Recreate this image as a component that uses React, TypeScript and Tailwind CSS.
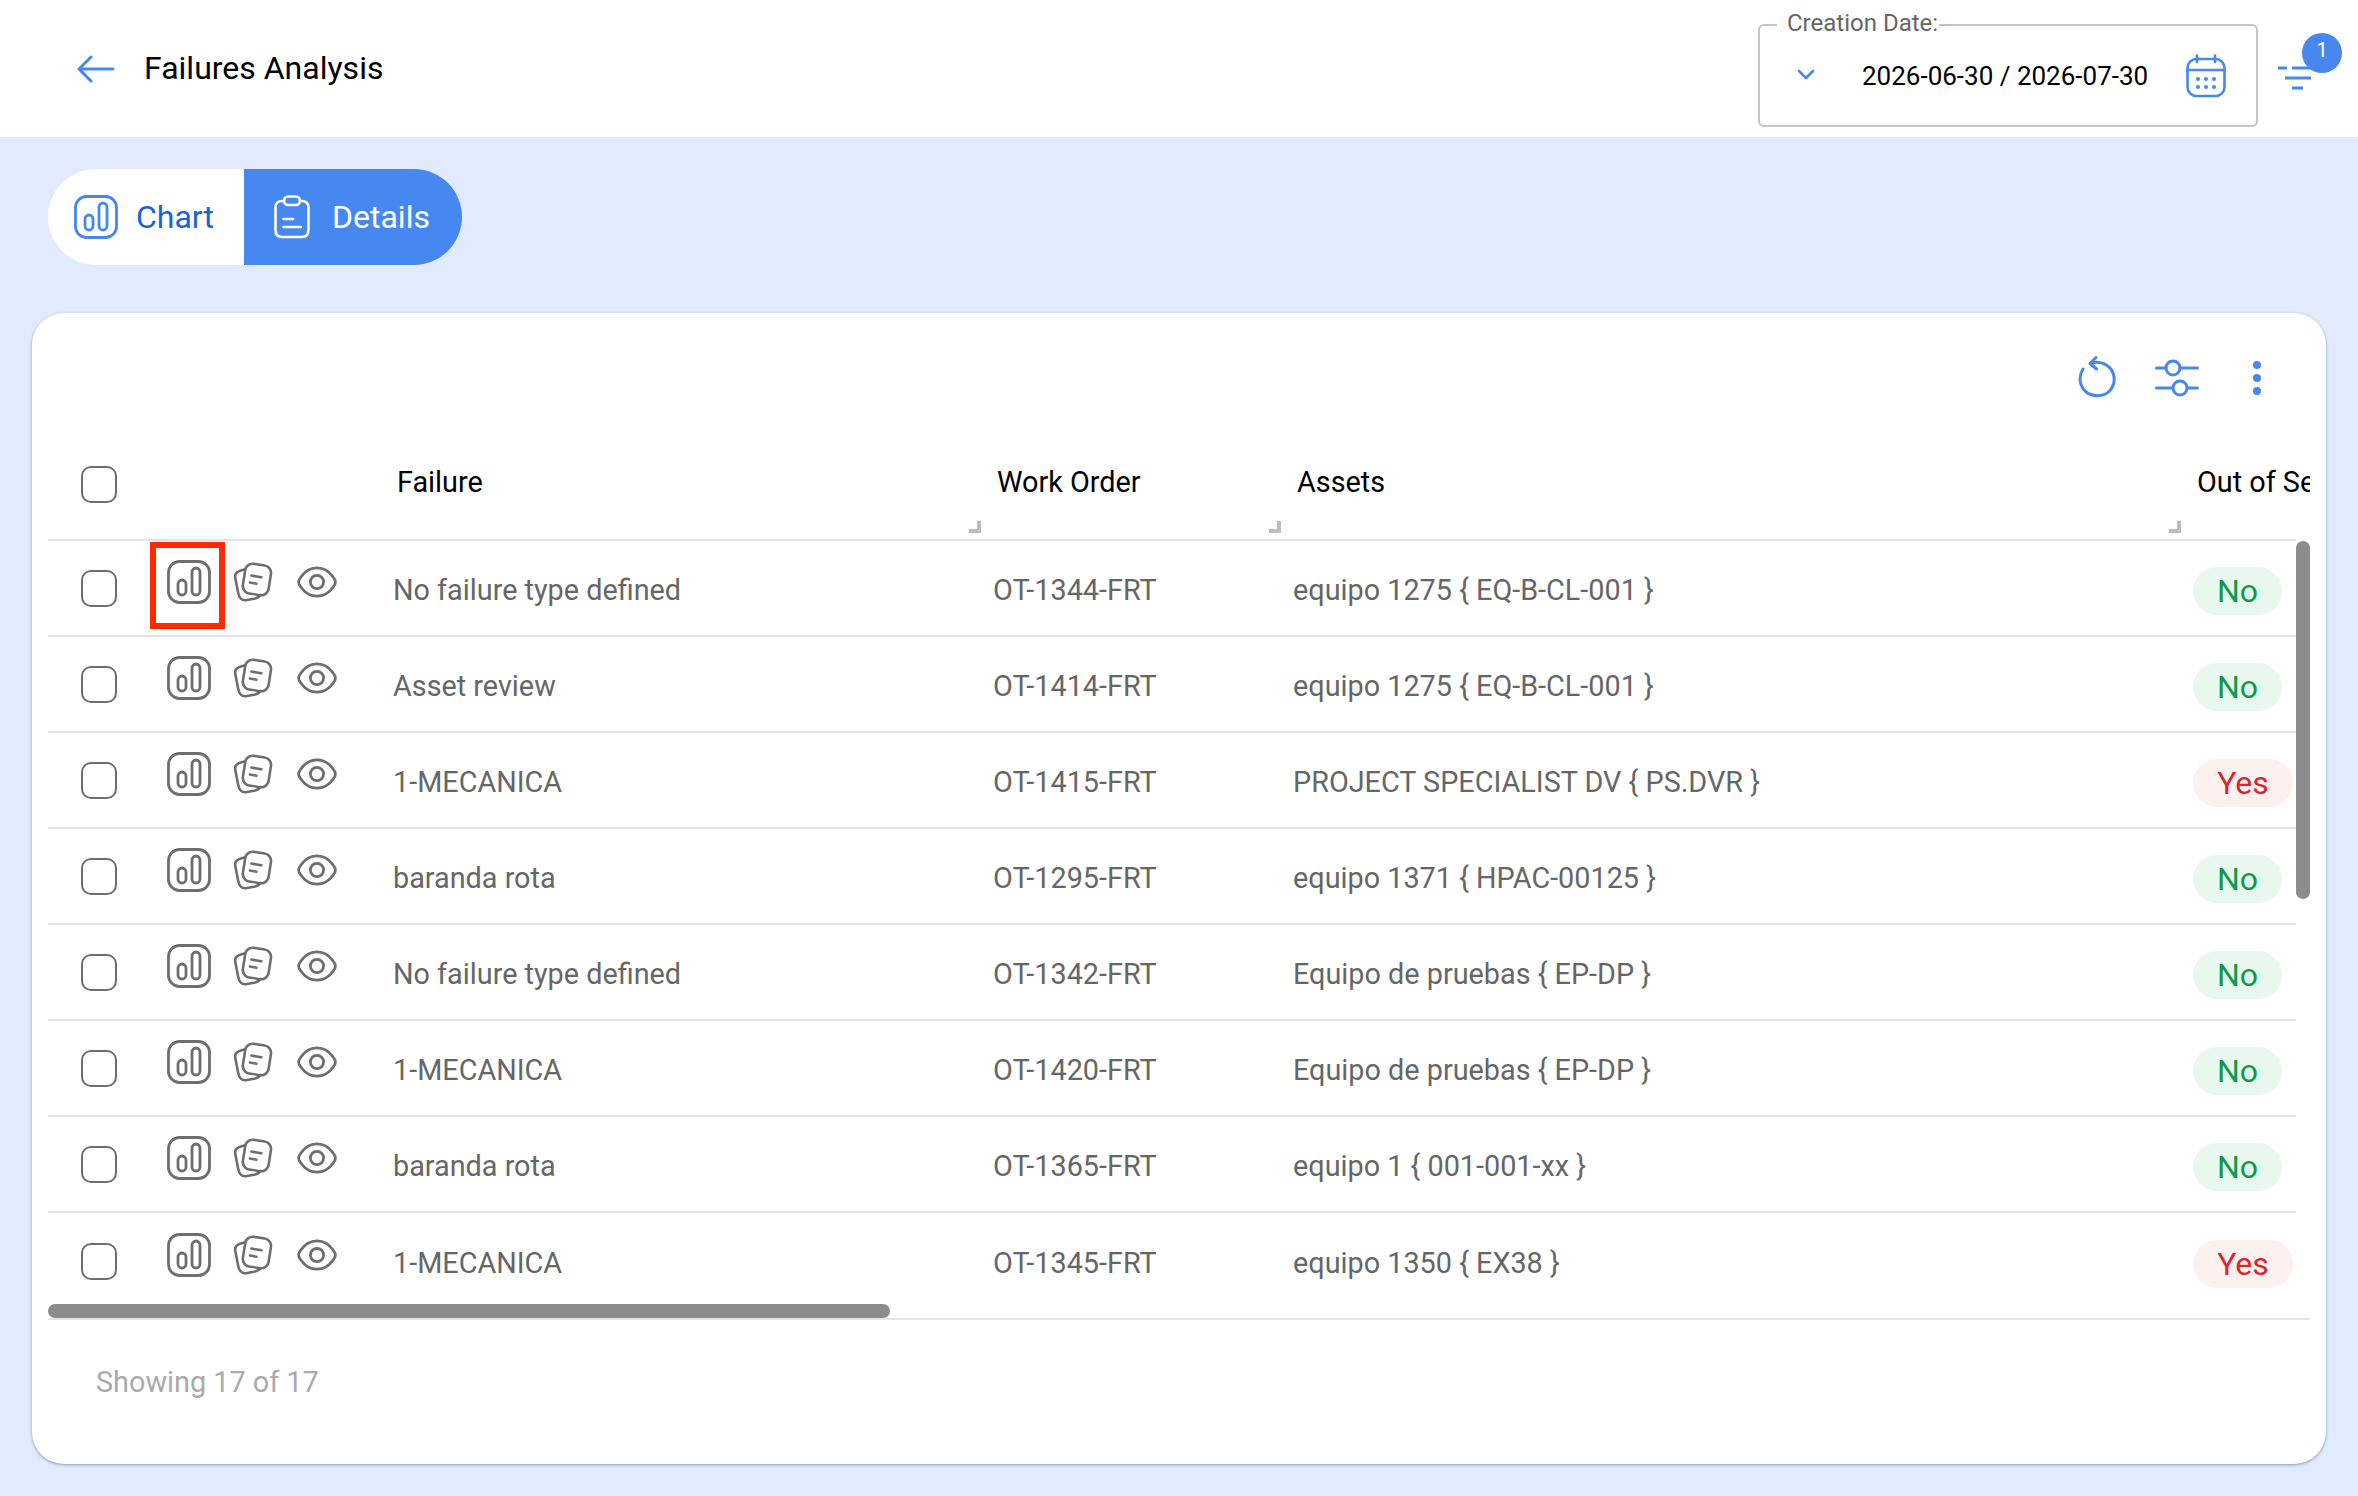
import React from "react";

const rows = [
  { failure: "No failure type defined", order: "OT-1344-FRT", asset: "equipo 1275 { EQ-B-CL-001 }", out: "No" },
  { failure: "Asset review", order: "OT-1414-FRT", asset: "equipo 1275 { EQ-B-CL-001 }", out: "No" },
  { failure: "1-MECANICA", order: "OT-1415-FRT", asset: "PROJECT SPECIALIST DV { PS.DVR }", out: "Yes" },
  { failure: "baranda rota", order: "OT-1295-FRT", asset: "equipo 1371 { HPAC-00125 }", out: "No" },
  { failure: "No failure type defined", order: "OT-1342-FRT", asset: "Equipo de pruebas { EP-DP }", out: "No" },
  { failure: "1-MECANICA", order: "OT-1420-FRT", asset: "Equipo de pruebas { EP-DP }", out: "No" },
  { failure: "baranda rota", order: "OT-1365-FRT", asset: "equipo 1 { 001-001-xx }", out: "No" },
  { failure: "1-MECANICA", order: "OT-1345-FRT", asset: "equipo 1350 { EX38 }", out: "Yes" },
];

function ChartIcon({ className }: { className?: string }) {
  return (
    <svg viewBox="0 0 44 44" fill="none" stroke="currentColor" strokeWidth="2.8" className={className}>
      <rect x="1.5" y="1.5" width="41" height="41" rx="11" />
      <rect x="11" y="20" width="8" height="15" rx="4" />
      <rect x="25" y="8" width="8" height="27" rx="4" />
    </svg>
  );
}

function PapersIcon({ className }: { className?: string }) {
  return (
    <svg viewBox="0 0 40 40" fill="none" stroke="currentColor" strokeWidth="2.6" strokeLinecap="round" className={className}>
      <path d="M11 7.5 L7 8.8 C3.5 10 1.6 12.5 2.3 16 L5.2 31 C6 35.5 9 39 13 38.2 L22 36.4 C24.5 35.8 26.5 34.8 27.5 33" />
      <rect x="11" y="2.5" width="26" height="30" rx="7.5" transform="rotate(9 24 17)" />
      <path d="M18.5 13.5 L28.5 15.3 M17 20.5 L23.5 21.7" />
    </svg>
  );
}

function EyeIcon({ className }: { className?: string }) {
  return (
    <svg viewBox="0 0 40 32" fill="none" stroke="currentColor" strokeWidth="2.8" className={className}>
      <path d="M1.6 16 C1.6 14.5 2.4 13 3.5 11.5 C7.5 5.5 13.5 1.8 20 1.8 C26.5 1.8 32.5 5.5 36.5 11.5 C37.6 13 38.4 14.5 38.4 16 C38.4 17.5 37.6 19 36.5 20.5 C32.5 26.5 26.5 30.2 20 30.2 C13.5 30.2 7.5 26.5 3.5 20.5 C2.4 19 1.6 17.5 1.6 16 Z" />
      <circle cx="20" cy="16" r="6.6" />
    </svg>
  );
}

function Checkbox() {
  return <div className="w-[36px] h-[37px] rounded-[10px] border-2 border-[#6e6e6e] bg-white" />;
}

function ResizeHandle() {
  return (
    <svg viewBox="0 0 12 12" className="absolute right-[12px] bottom-[6px] w-[12px] h-[12px] text-[#bdbdbd]" fill="currentColor">
      <path d="M8 0 H12 V12 H0 V8 H8 Z" />
    </svg>
  );
}

function OutPill({ value }: { value: string }) {
  return value === "No" ? (
    <span className="flex items-center justify-center shrink-0 w-[89px] h-[48px] mt-[6px] rounded-full bg-[#e8f8ee] text-[#0e9b48] text-[32px]">No</span>
  ) : (
    <span className="flex items-center justify-center shrink-0 w-[100px] h-[48px] mt-[6px] rounded-full bg-[#fdf1f0] text-[#d9252b] text-[32px]">Yes</span>
  );
}

export default function App() {
  return (
    <div className="w-[2358px] h-[1496px] overflow-hidden bg-[#e2ebfd] font-['Roboto',sans-serif]">
      {/* Header */}
      <header className="relative flex items-center justify-between h-[137px] bg-white pl-[77px]">
        <div className="flex items-center">
          <svg viewBox="0 0 38 28" fill="none" stroke="#4787f0" strokeWidth="3" strokeLinecap="round" strokeLinejoin="round" className="w-[38px] h-[28px]">
            <path d="M36 14 H2 M14 2 L2 14 L14 26" />
          </svg>
          <h1 className="ml-[29px] mb-[2px] text-[32px] leading-[40px] text-black font-normal">Failures Analysis</h1>
        </div>

        <div className="flex items-center mr-[16px]">
          <div className="relative flex items-center w-[500px] h-[103px] mt-[14px] rounded-[6px] border-2 border-[#c4c4c4] bg-white">
            <span className="absolute left-[17px] top-[-18px] bg-white pl-[10px] pr-[1px] text-[24px] leading-[30px] text-[#666]">Creation Date:</span>
            <svg viewBox="0 0 18 11" fill="none" stroke="#4787f0" strokeWidth="2.6" strokeLinecap="round" strokeLinejoin="round" className="ml-[37px] mb-[2px] w-[18px] h-[11px]">
              <path d="M2 2 L9 9 L16 2" />
            </svg>
            <span className="ml-[47px] text-[26px] leading-[32px] text-black">2026-06-30 / 2026-07-30</span>
            <svg viewBox="0 0 40 44" fill="none" stroke="#4787f0" strokeWidth="2.6" strokeLinecap="round" className="ml-[38px] w-[40px] h-[44px]">
              <rect x="1.5" y="5" width="37" height="37" rx="9" />
              <path d="M1.5 16 H38.5 M11 1.5 V8 M29 1.5 V8" />
              <g fill="#4787f0" stroke="none">
                <circle cx="12" cy="25" r="2" />
                <circle cx="20" cy="25" r="2" />
                <circle cx="28" cy="25" r="2" />
                <circle cx="12" cy="33" r="2" />
                <circle cx="20" cy="33" r="2" />
                <circle cx="28" cy="33" r="2" />
              </g>
            </svg>
          </div>

          <div className="relative ml-[20px] w-[64px] h-[60px] mt-[-12px]">
            <svg viewBox="0 0 36 24" fill="none" stroke="#4787f0" strokeWidth="3" className="absolute left-0 top-[33px] w-[36px] h-[24px]">
              <path d="M0 2 H9 M14 2 H36 M7 12 H33 M14 22 H25" />
            </svg>
            <span className="absolute right-0 top-0 flex items-center justify-center w-[40px] h-[40px] pb-[5px] rounded-full bg-[#4787f0] text-white text-[20px]">1</span>
          </div>
        </div>
      </header>

      {/* Tabs */}
      <div className="flex mt-[32px] ml-[48px] w-[414px] h-[96px] rounded-full overflow-hidden text-[32px] leading-[40px]">
        <div className="flex items-center w-[196px] bg-white pl-[26px] text-[#1a62d8]">
          <ChartIcon className="w-[44px] h-[44px] text-[#4787f0]" />
          <span className="ml-[18px] mb-[1px]">Chart</span>
        </div>
        <div className="flex items-center flex-1 bg-[#4787f0] pl-[30px] text-white">
          <svg viewBox="0 0 36 44" fill="none" stroke="currentColor" strokeWidth="2.6" strokeLinecap="round" className="w-[36px] h-[44px]">
            <path d="M10 6 H8 C4 6 1.5 8.5 1.5 12 V35 C1.5 39.5 4 42 8 42 H28 C32 42 34.5 39.5 34.5 35 V12 C34.5 8.5 32 6 28 6 H26" />
            <rect x="10" y="1.5" width="16" height="8.5" rx="4.2" />
            <path d="M9.5 24 H19 M9.5 32 H27" />
          </svg>
          <span className="ml-[22px] mb-[1px]">Details</span>
        </div>
      </div>

      {/* Card */}
      <section className="flex flex-col mt-[48px] mx-[32px] h-[1151px] rounded-[32px] bg-white px-[16px] pt-[43px] shadow-[0_1px_3px_rgba(60,80,110,0.55)]">
        <div className="flex items-start justify-end h-[42px] pr-[49px]">
          <svg viewBox="0 0 38 42" fill="none" stroke="#4787f0" strokeWidth="3" strokeLinecap="round" strokeLinejoin="round" className="w-[38px] h-[42px]">
            <path d="M14 7 C19 5.5 27 6.5 32 12 C38 19 37.5 29 31 35.5 C25 41 14 41 7.5 35.5 C1 29 0.5 20 5 13" />
            <path d="M18 1.5 L12 7.5 L18.5 13" />
          </svg>
          <svg viewBox="0 0 44 40" fill="none" stroke="#4787f0" strokeWidth="3" strokeLinecap="round" className="ml-[39px] mt-[2px] w-[44px] h-[40px]">
            <circle cx="18" cy="10" r="7" />
            <circle cx="25" cy="30" r="7" />
            <path d="M1.5 10 H11 M25 10 H42.5 M1.5 30 H18 M32 30 H42.5" />
          </svg>
          <div className="flex flex-col items-center gap-[5px] ml-[54px] mt-[5px]">
            <span className="w-[8px] h-[8px] rounded-full bg-[#4787f0]" />
            <span className="w-[8px] h-[8px] rounded-full bg-[#4787f0]" />
            <span className="w-[8px] h-[8px] rounded-full bg-[#4787f0]" />
          </div>
        </div>

        {/* Table */}
        <div className="relative w-[2262px] overflow-hidden border-b-2 border-[#e5e5e5]">
          <div className="flex items-center h-[143px] w-[2248px] border-b-2 border-[#e5e5e5] text-[28.8px] text-black">
            <div className="w-[102px] shrink-0 pl-[33px] pt-[32px]">
              <Checkbox />
            </div>
            <div className="w-[243px] shrink-0" />
            <div className="relative w-[600px] shrink-0 h-full flex items-center pl-[4px] pt-[29px]">
              Failure
              <ResizeHandle />
            </div>
            <div className="relative w-[300px] shrink-0 h-full flex items-center pl-[4px] pt-[29px]">
              Work Order
              <ResizeHandle />
            </div>
            <div className="relative w-[900px] shrink-0 h-full flex items-center pl-[4px] pt-[29px]">
              Assets
              <ResizeHandle />
            </div>
            <div className="shrink-0 h-full flex items-center pl-[4px] pt-[29px] whitespace-nowrap">Out of Service</div>
          </div>

          <div className="pb-[9px]">
            {rows.map((r, i) => (
              <div
                key={i}
                className={
                  i < rows.length - 1
                    ? "flex items-center h-[96px] w-[2248px] border-b-2 border-[#e5e5e5] text-[28.8px] text-[#666]"
                    : "flex items-center h-[96px] w-[2248px] text-[28.8px] text-[#666]"
                }
              >
                <div className="w-[102px] shrink-0 pl-[33px] pt-[1px]">
                  <Checkbox />
                </div>
                <div className="relative flex items-center shrink-0 w-[243px] h-full pl-[17px] pb-[12px] text-[#6e6e6e]">
                  <ChartIcon className="w-[44px] h-[44px]" />
                  <PapersIcon className="ml-[22px] w-[40px] h-[40px]" />
                  <EyeIcon className="ml-[24px] w-[40px] h-[32px]" />
                  {i === 0 && <div className="absolute left-0 top-[1px] w-[75px] h-[87px] border-[6px] border-[#ff2a00]" />}
                </div>
                <div className="w-[600px] shrink-0 whitespace-nowrap pt-[6px]">{r.failure}</div>
                <div className="w-[300px] shrink-0 whitespace-nowrap pt-[6px]">{r.order}</div>
                <div className="w-[900px] shrink-0 whitespace-nowrap pt-[6px]">{r.asset}</div>
                <OutPill value={r.out} />
              </div>
            ))}
          </div>

          {/* Scrollbars */}
          <div className="absolute right-0 top-[143px] w-[14px] h-[358px] rounded-full bg-[#8c8c8c]" />
          <div className="absolute left-0 bottom-0 w-[842px] h-[14px] rounded-full bg-[#8c8c8c]" />
        </div>

        <div className="flex items-center h-[124px] pl-[48px] pt-[2px] text-[28.8px] text-[#aaa]">Showing 17 of 17</div>
      </section>
    </div>
  );
}
